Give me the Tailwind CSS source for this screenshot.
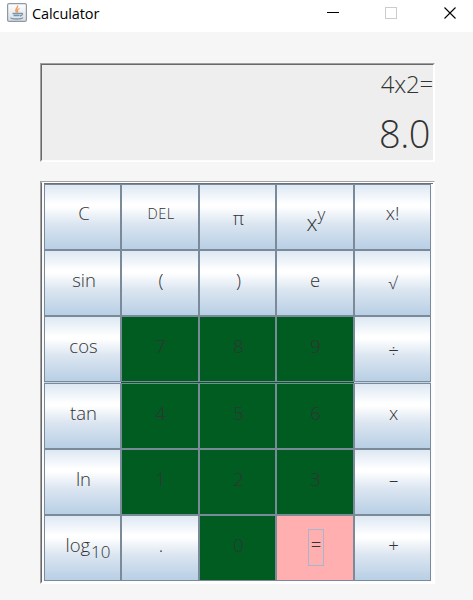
<!DOCTYPE html>
<html lang="en">
<head>
<meta charset="utf-8">
<title>Calculator</title>
<script src="https://cdn.jsdelivr.net/npm/@tailwindcss/browser@4"></script>
</head>
<body class="w-[473px] h-[600px] overflow-hidden bg-[#f6f6f6] font-['Open_Sans','Noto_Sans',sans-serif] text-[#333]">
<header class="flex h-8 bg-white text-black">
  <div class="flex grow pl-[7px] pt-[3px]">
    <svg class="w-5 h-[19px]" viewBox="0 0 20 19" fill="none">
      <defs><linearGradient id="g" x2="0" y2="1"><stop stop-color="#fff"/><stop offset="1" stop-color="#d9dde1"/></linearGradient></defs>
      <rect x=".6" y=".6" width="18.8" height="17.8" rx="1.5" fill="url(#g)" stroke="#8d9aa5" stroke-width="1.2"/>
      <path d="M10.500 2.500C11.500 5 7 6 9.500 9.500M12.500 5.500C10 6.500 10 7.500 11 9.500" stroke="#ee9a5a" stroke-width="1.300"/>
      <path d="M5.500 10.500H13.500M6.500 12.500H12.500M13.500 10.500c3-.8 2.500 1.800-.5 2.500M4 14.500c-1 2 11 2 12 0" stroke="#7896ad" stroke-width="1.300"/>
    </svg>
    <span class="ml-[5px] text-[14.5px] leading-[21px] tracking-[-0.1px]">Calculator</span>
  </div>
  <svg class="w-[146px] h-8" viewBox="0 0 146 32" fill="none" shape-rendering="crispEdges">
    <path d="M0 12.5h12" stroke="#000"/>
    <rect x="58.500" y="7.500" width="11" height="11" stroke="#ccc"/>
    <path d="M117.500 7.500l11 11M128.500 7.500l-11 11" stroke="#000" stroke-width="1.1" shape-rendering="auto"/>
  </svg>
</header>
<main class="pl-10 pt-[31px]">
  <section class="w-[395px] h-[99px] border border-t-[#a0a0a0] border-l-[#a0a0a0] border-r-white border-b-white">
    <div class="h-full border border-t-[#696969] border-l-[#696969] border-r-white border-b-[#fcfcfc] bg-[#eee] font-light text-right">
      <div class="h-[35px] text-[24px] leading-[38px] tracking-[-0.2px]">4x2=</div>
      <div class="h-[60px] pr-[3px] text-[38px] leading-[67px] tracking-[-0.5px]">8.0</div>
    </div>
  </section>
  <section class="mt-[19px] w-[395px] h-[403px] border border-t-[#a0a0a0] border-l-[#a0a0a0] border-r-white border-b-white">
    <div class="h-full border border-t-white border-l-[#696969] border-r-white border-b-white bg-[#fcfcfe] pl-[2px]">
      <div class="h-px bg-[#6b7078]"></div>
      <div id="keys" class="grid w-[387px] grid-cols-[77px_78px_77px_78px_77px] grid-rows-[66px_66px_67px_66px_66px_66px] bg-[#c3d4e5] text-[18.5px] font-light"></div>
    </div>
  </section>
</main>
<script>
  const blue = 'bg-[linear-gradient(to_bottom,#dde8f3_0%,#ffffff_30%,#ffffff_34%,#dce6f1_60%,#b8cfe5_100%)]';
  const green = 'bg-[#005c21]';
  const greenGap = 'bg-[#005c21] shadow-[0_1px_0_#005c21]';
  const pink = 'bg-[#ffafaf]';
  const keys = [
    ['C', 'pl-[3px] pb-[8px]'], ['<span class="text-[14.5px] tracking-[.5px]">DEL</span>', 'pl-[2px] pb-[7px]'], ['π', 'pl-[2px] pt-[1px]'],
    ['<span class="flex items-start"><span class="pt-[6px] text-[22px] leading-6">x</span><span class="text-[17px] leading-5">y</span></span>', 'pl-[2px] pt-[3px]'], ['x!', 'pb-[8px]'],
    ['sin', 'pb-[6px] pl-[3px]'], ['(', 'pl-[2px] pb-[6px]'], [')', 'pl-[2px] pb-[6px]'], ['e', 'pb-[6px]'], ['√', 'text-[17px] pl-px'],
    ['cos', 'pl-[2px] pb-[6px]'], ['7', 'pl-px pb-[6px]', greenGap], ['8', 'pl-[2px] pb-[6px]', greenGap], ['9', 'pl-px pb-[6px]', greenGap], ['÷', 'pl-[2px] pt-[4px]'],
    ['tan', 'pl-[2px] pb-[7px]'], ['4', 'pl-px pb-[7px]', green], ['5', 'pl-[2px] pb-[7px]', green], ['6', 'pl-px pb-[7px]', green], ['x', 'pl-[2px] pb-[7px]'],
    ['ln', 'pl-[2px] pb-[7px]'], ['1', 'pl-px pb-[7px]', green], ['2', 'pl-[2px] pb-[7px]', green], ['3', 'pl-px pb-[7px]', green], ['–', 'pl-[2px] pb-[7px]'],
    ['<span class="flex items-start"><span class="leading-6">log</span><span class="pt-[9px] pl-px text-[17px] leading-5">10</span></span>', 'pl-[11px] pb-[2px]'],
    ['.', 'pl-[2px] pb-[6px]'], ['0', 'pl-[2px] pb-[6px]', green],
    ['<span class="flex h-[37px] w-4 items-center justify-center border border-[#a3b8cc] pb-[8px]">=</span>', 'pl-[2px] pb-[1px]', pink], ['+', 'pl-[2px] pb-[6px]']
  ];
  document.getElementById('keys').innerHTML = keys.map(([label, pad, bg = blue]) =>
    `<button class="flex h-[66px] items-center justify-center border border-[#7a8a99] ${pad} ${bg}">${label}</button>`).join('');
</script>
</body>
</html>
